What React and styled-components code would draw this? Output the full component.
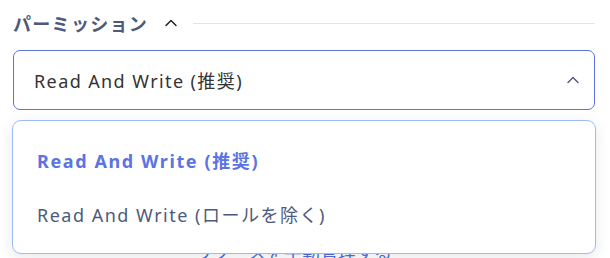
import React from 'react';
import styled, { createGlobalStyle } from 'styled-components';

const GlobalStyle = createGlobalStyle`
  body {
    margin: 0;
    background: #ffffff;
    font-family: "Noto Sans", "Noto Sans CJK JP", sans-serif;
  }
`;

const Page = styled.div`
  width: 582px;
  padding: 8px 0 0 13px;
`;

const SectionHeader = styled.div`
  display: flex;
  align-items: center;
  height: 30px;
`;

const SectionTitle = styled.h2`
  margin: 0;
  font-family: "Noto Sans CJK JP", sans-serif;
  font-size: 18px;
  font-weight: 700;
  color: #4d5a7c;
  letter-spacing: 1.3px;
`;

const Toggle = styled.span`
  display: flex;
  margin-left: 16px;
`;

const Rule = styled.div`
  flex: 1;
  height: 1px;
  background: #e3e3e3;
  margin-left: 15px;
`;

const Field = styled.div`
  position: relative;
  margin-top: 12px;
`;

const SelectBox = styled.div`
  display: flex;
  align-items: center;
  justify-content: space-between;
  height: 58px;
  padding: 0 14px 0 20px;
  border: 1px solid #5c72dc;
  border-radius: 7px;
  font-size: 18px;
  letter-spacing: 1.4px;
  color: #333333;
`;

const Menu = styled.ul`
  position: absolute;
  top: 70px;
  left: -1px;
  right: -1px;
  margin: 0;
  padding: 12px 0;
  list-style: none;
  background: #ffffff;
  border: 1px solid #9dbcf7;
  border-radius: 9px;
  box-shadow: 0 4px 14px rgba(30, 40, 80, 0.1);
  z-index: 2;
`;

const Option = styled.li`
  display: flex;
  align-items: center;
  height: 54px;
  padding-left: 24px;
  font-size: 18px;
  letter-spacing: ${(p) => (p.$selected ? '1.6px' : '1.5px')};
  font-weight: ${(p) => (p.$selected ? 700 : 400)};
  color: ${(p) => (p.$selected ? '#5b74e2' : '#4d5a7c')};
`;

const BehindLink = styled.div`
  margin-top: 128px;
  padding-left: 182px;
  font-family: "Noto Sans CJK JP", sans-serif;
  font-size: 18px;
  color: #4a6ddc;
`;

const ChevronUp = ({ color, size = 14 }) => (
  <svg width={size} height={size} viewBox="0 0 14 14" fill="none">
    <path d="M2 9.5 L7 4.5 L12 9.5" stroke={color} strokeWidth="1.4" strokeLinecap="round" strokeLinejoin="round" />
  </svg>
);

export default function App() {
  return (
    <>
      <GlobalStyle />
      <Page>
        <SectionHeader>
          <SectionTitle>パーミッション</SectionTitle>
          <Toggle><ChevronUp color="#1a1a1a" /></Toggle>
          <Rule />
        </SectionHeader>
        <Field>
          <SelectBox>
            <span>Read And Write (推奨)</span>
            <ChevronUp color="#4d5a7c" />
          </SelectBox>
          <Menu>
            <Option $selected>Read And Write (推奨)</Option>
            <Option>Read And Write (ロールを除く)</Option>
          </Menu>
          <BehindLink>リソースを手動管理する</BehindLink>
        </Field>
      </Page>
    </>
  );
}
